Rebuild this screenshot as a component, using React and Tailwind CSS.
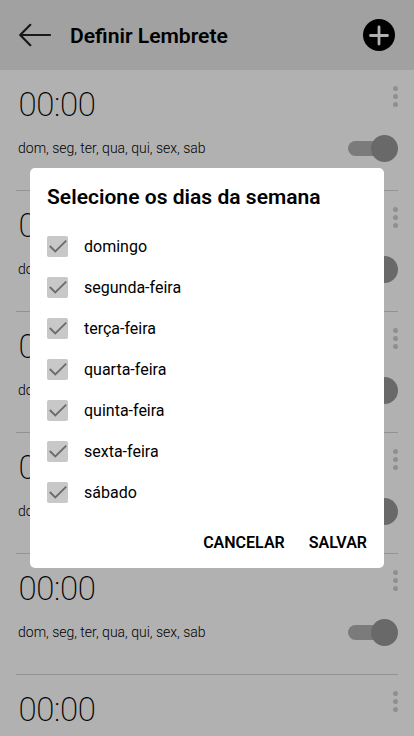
const days = [
  'domingo',
  'segunda-feira',
  'terça-feira',
  'quarta-feira',
  'quinta-feira',
  'sexta-feira',
  'sábado',
];

function Header() {
  return (
    <header className="flex h-[70px] shrink-0 items-center bg-[#a1a1a1] pr-[19px] pl-[19px]">
      <svg className="block h-6 w-8" viewBox="0 0 32 24" fill="none" stroke="#191919" strokeWidth="2.2" strokeLinecap="round" strokeLinejoin="round">
        <path d="M31 12H1.2M11.3 1.8L1.2 12l10.1 10.2" />
      </svg>
      <h1 className="mt-0.5 ml-[19px] flex-1 text-[21.1px] leading-7 font-semibold text-black">Definir Lembrete</h1>
      <svg className="block h-8 w-8" viewBox="0 0 32 32">
        <circle cx="16" cy="16" r="16" fill="#000" />
        <path d="M7.5 16.5h17M16 8v17" stroke="#b1b1b1" strokeWidth="2.8" strokeLinecap="round" />
      </svg>
    </header>
  );
}

function Reminder() {
  return (
    <li className="mx-4 flex h-[121px] shrink-0 justify-between border-b border-[#929292]">
      <div className="pl-[2px]">
        <div className="mt-[15px] ml-[0.5px] h-10 text-[33px] leading-10 font-extralight tracking-[-0.4px] text-black">00:00</div>
        <div className="mt-[13px] text-sm leading-5 font-light text-black">dom, seg, ter, qua, qui, sex, sab</div>
      </div>
      <div className="flex flex-col items-end">
        <div className="mt-4 flex flex-col gap-[3px]">
          <span className="h-[5px] w-[5px] rounded-full bg-[#8f8f8f]" />
          <span className="h-[5px] w-[5px] rounded-full bg-[#8f8f8f]" />
          <span className="h-[5px] w-[5px] rounded-full bg-[#8f8f8f]" />
        </div>
        <div className="mt-7 flex h-[27px] w-[50px] items-center">
          <span className="h-[15px] w-9 rounded-full bg-[#7b7b7b]" />
          <span className="-ml-[13px] h-[27px] w-[27px] shrink-0 rounded-full bg-[#696969]" />
        </div>
      </div>
    </li>
  );
}

function DayOption({ name }) {
  return (
    <li className="flex h-[41px] items-center">
      <svg className="block h-[21px] w-[21px]" viewBox="0 0 21 21" fill="none">
        <rect width="21" height="21" rx="2" fill="#c8c8c8" />
        <path d="M2.8 10L8.3 15.5L19.2 4.7" stroke="#6b6b6b" strokeWidth="1.8" />
      </svg>
      <span className="ml-4 text-base leading-6 text-black">{name}</span>
    </li>
  );
}

function DaysDialog() {
  return (
    <div className="absolute top-[168px] left-[30px] flex h-[400px] w-[354px] flex-col rounded-[5px] bg-white px-[17px]">
      <h2 className="mt-[15px] text-[21px] leading-7 font-semibold tracking-[0.03px] whitespace-nowrap text-black">Selecione os dias da semana</h2>
      <ul className="mt-[15px]">
        {days.map((day) => (
          <DayOption key={day} name={day} />
        ))}
      </ul>
      <div className="mt-[18px] flex justify-end gap-6 text-base leading-6 font-semibold text-black">
        <button>CANCELAR</button>
        <button>SALVAR</button>
      </div>
    </div>
  );
}

export default function App() {
  return (
    <div className="relative flex h-[736px] w-[414px] flex-col overflow-hidden bg-[#b1b1b1] font-[Roboto,sans-serif]">
      <Header />
      <ul className="flex flex-col">
        {[0, 1, 2, 3, 4, 5].map((i) => (
          <Reminder key={i} />
        ))}
      </ul>
      <DaysDialog />
    </div>
  );
}
